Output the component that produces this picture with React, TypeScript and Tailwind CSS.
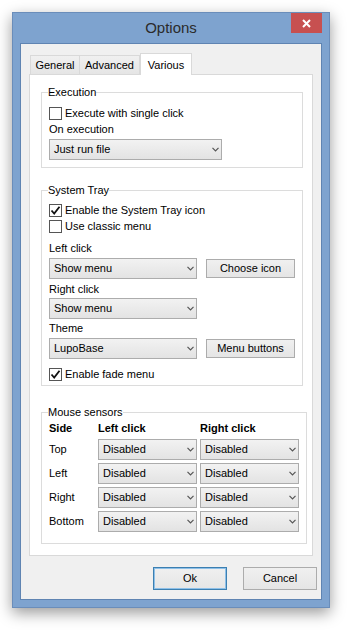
import React from "react";

const font = { fontFamily: '"Liberation Sans", Arial, sans-serif' };

const Chevron = () => (
  <svg width="7" height="5" viewBox="0 0 7 5" className="shrink-0">
    <path d="M0.5 0.8 L3.5 3.8 L6.5 0.8" fill="none" stroke="#555" strokeWidth="1.2" />
  </svg>
);

const Select: React.FC<{ value: string; w: string }> = ({ value, w }) => (
  <div
    className={`${w} h-[21px] flex items-center justify-between pl-[4px] pr-[2px] border border-[#acacac] bg-gradient-to-b from-[#f2f2f2] to-[#e3e3e3] text-[11px] text-black`}
  >
    <span>{value}</span>
    <Chevron />
  </div>
);

const Checkbox: React.FC<{ checked?: boolean; label: string }> = ({ checked, label }) => (
  <div className="flex items-center h-[16px] gap-[3px] text-[11px] text-black">
    <div className="w-[13px] h-[13px] border border-[#555] bg-white flex items-center justify-center">
      {checked && (
        <svg width="11" height="11" viewBox="0 0 11 11">
          <path d="M1.5 5.5 L4.2 8.5 L9.5 1.8" fill="none" stroke="#111" strokeWidth="1.8" />
        </svg>
      )}
    </div>
    <span>{label}</span>
  </div>
);

const Button: React.FC<{ label: string; className?: string }> = ({ label, className }) => (
  <div
    className={`flex items-center justify-center border border-[#acacac] bg-gradient-to-b from-[#f0f0f0] to-[#e5e5e5] text-[11px] text-black ${className ?? ""}`}
  >
    {label}
  </div>
);

const Label: React.FC<{ text: string; className?: string }> = ({ text, className }) => (
  <div className={`h-[15px] flex items-center text-[11px] text-black ${className ?? ""}`}>{text}</div>
);

const Group: React.FC<{ title: string; className?: string; children: React.ReactNode }> = ({
  title,
  className,
  children,
}) => (
  <fieldset className={`border border-[#dcdcdc] px-[7px] ${className ?? ""}`}>
    <legend className="-ml-[1px] px-0 h-[14px] leading-[14px] text-[11px] text-black">{title}</legend>
    {children}
  </fieldset>
);

export default function App() {
  const sensors = ["Top", "Left", "Right", "Bottom"];

  return (
    <div className="w-[350px] h-[631px] bg-white pt-[12px] pl-[12px]" style={font}>
      <div className="w-[318px] bg-[#7ea3cf] border border-[#6a8dba] shadow-[0_5px_14px_rgba(0,0,0,0.4)] px-[7px] pb-[7px]">
        {/* Title bar */}
        <div className="relative h-[30px] flex items-center justify-center">
          <span className="text-[15px] text-[#2b2b2b] pt-[1px]">Options</span>
          <div className="absolute right-0 top-0 w-[31px] h-[20px] bg-[#c75050] flex items-center justify-center">
            <svg width="9" height="9" viewBox="0 0 9 9">
              <path d="M1 1 L8 8 M8 1 L1 8" stroke="#fff" strokeWidth="2" />
            </svg>
          </div>
        </div>

        {/* Client area */}
        <div className="bg-[#f0f0f0] border border-[#5f84b2] pt-[9px] px-[8px] pb-[9px]">
          {/* Tabs */}
          <div className="flex items-end h-[21px] pl-[1px]">
            <div className="h-[19px] w-[50px] flex items-center justify-center border border-[#d9d9d9] border-b-0 bg-gradient-to-b from-[#f0f0f0] to-[#e5e5e5] text-[11px]">
              General
            </div>
            <div className="h-[19px] w-[60px] flex items-center justify-center border border-[#d9d9d9] border-l-0 border-b-0 bg-gradient-to-b from-[#f0f0f0] to-[#e5e5e5] text-[11px]">
              Advanced
            </div>
            <div className="relative h-[22px] w-[52px] -mb-[1px] flex items-start pt-[3px] justify-center border border-[#d9d9d9] border-b-0 bg-white text-[11px] z-10">
              Various
            </div>
          </div>

          {/* Tab panel */}
          <div className="bg-white border border-[#d9d9d9] pl-[11px] pr-[9px] pt-[10px] pb-[11px]">
            <Group title="Execution" className="pb-[7px]">
              <div className="mt-[6px]">
                <Checkbox label="Execute with single click" />
              </div>
              <Label text="On execution" className="mt-[1px]" />
              <div className="mt-[2px]">
                <Select value="Just run file" w="w-[173px]" />
              </div>
            </Group>

            <Group title="System Tray" className="mt-[15px] pb-[3px]">
              <div className="mt-[5px]">
                <Checkbox checked label="Enable the System Tray icon" />
                <Checkbox label="Use classic menu" />
              </div>
              <Label text="Left click" className="mt-[7px]" />
              <div className="mt-[2px] flex items-center gap-[9px]">
                <Select value="Show menu" w="w-[148px]" />
                <Button label="Choose icon" className="w-[89px] h-[19px]" />
              </div>
              <Label text="Right click" className="mt-[3px]" />
              <div className="mt-[1px]">
                <Select value="Show menu" w="w-[148px]" />
              </div>
              <Label text="Theme" className="mt-[2px]" />
              <div className="mt-[2px] flex items-center gap-[9px]">
                <Select value="LupoBase" w="w-[148px]" />
                <Button label="Menu buttons" className="w-[89px] h-[19px]" />
              </div>
              <div className="mt-[7px]">
                <Checkbox checked label="Enable fade menu" />
              </div>
            </Group>

            <Group title="Mouse sensors" className="mt-[19px] pb-[11px]">
              <div className="mt-[1px] grid grid-cols-[46px_99px_99px] gap-x-[3px] gap-y-[3px] items-center text-[11px] text-black">
                <div className="h-[16px] font-bold flex items-center">Side</div>
                <div className="h-[16px] font-bold flex items-center">Left click</div>
                <div className="h-[16px] font-bold flex items-center">Right click</div>
                {sensors.map((s) => (
                  <React.Fragment key={s}>
                    <div>{s}</div>
                    <Select value="Disabled" w="w-[99px]" />
                    <Select value="Disabled" w="w-[99px]" />
                  </React.Fragment>
                ))}
              </div>
            </Group>
          </div>

          {/* Dialog buttons */}
          <div className="mt-[11px] flex justify-end gap-[16px] -mr-[4px]">
            <Button label="Ok" className="w-[74px] h-[23px] !border-[#3c7fb1] outline outline-1 -outline-offset-2 outline-[#8ec0e8]" />
            <Button label="Cancel" className="w-[74px] h-[23px]" />
          </div>
        </div>
      </div>
    </div>
  );
}
